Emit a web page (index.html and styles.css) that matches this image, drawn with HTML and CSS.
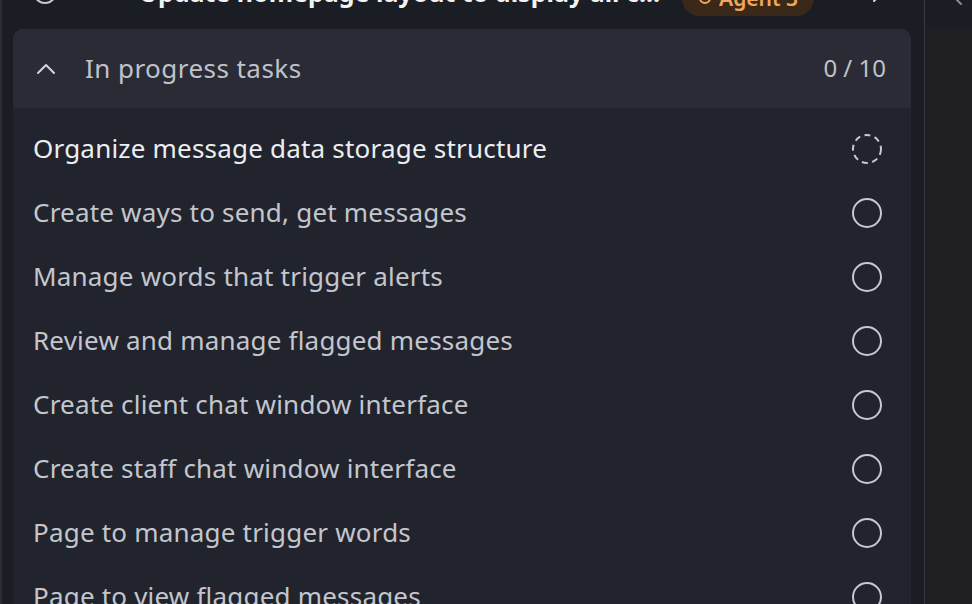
FILE: index.html
```html
<!DOCTYPE html>
<html lang="en">
<head>
<meta charset="utf-8">
<title>Tasks</title>
<link rel="stylesheet" href="styles.css">
</head>
<body>
<div class="app">
  <div class="main">
    <div class="top-row">
      <svg class="top-icon" width="26" height="26" viewBox="0 0 26 26"><circle cx="13" cy="13" r="11" fill="none" stroke="#c8c9d0" stroke-width="2"/></svg>
      <span class="top-title">Update homepage layout to display all c...</span>
      <span class="badge"><svg width="16" height="16" viewBox="0 0 16 16"><circle cx="8" cy="8" r="5" fill="none" stroke="#f2a55a" stroke-width="2"/></svg>Agent 3</span>
      <svg class="top-chev" width="16" height="20" viewBox="0 0 16 20"><path d="M4 2 L12 10 L4 18" fill="none" stroke="#d8d9de" stroke-width="2" stroke-linecap="round" stroke-linejoin="round"/></svg>
    </div>
    <section class="card">
      <header class="card-head">
        <svg class="chev-up" width="20" height="12" viewBox="0 0 20 12"><path d="M2 10 L10 2 L18 10" fill="none" stroke="#d4d5dc" stroke-width="2" stroke-linecap="round" stroke-linejoin="round"/></svg>
        <span class="head-title">In progress tasks</span>
        <span class="head-count">0 / 10</span>
      </header>
      <ul class="tasks">
        <li class="task active"><span>Organize message data storage structure</span><svg width="30" height="30" viewBox="0 0 30 30"><circle cx="15" cy="15" r="14" fill="none" stroke="#c8c9d0" stroke-width="2" stroke-dasharray="6 4.5"/></svg></li>
        <li class="task"><span>Create ways to send, get messages</span><svg width="30" height="30" viewBox="0 0 30 30"><circle cx="15" cy="15" r="14" fill="none" stroke="#c8c9d0" stroke-width="2"/></svg></li>
        <li class="task"><span>Manage words that trigger alerts</span><svg width="30" height="30" viewBox="0 0 30 30"><circle cx="15" cy="15" r="14" fill="none" stroke="#c8c9d0" stroke-width="2"/></svg></li>
        <li class="task"><span>Review and manage flagged messages</span><svg width="30" height="30" viewBox="0 0 30 30"><circle cx="15" cy="15" r="14" fill="none" stroke="#c8c9d0" stroke-width="2"/></svg></li>
        <li class="task"><span>Create client chat window interface</span><svg width="30" height="30" viewBox="0 0 30 30"><circle cx="15" cy="15" r="14" fill="none" stroke="#c8c9d0" stroke-width="2"/></svg></li>
        <li class="task"><span>Create staff chat window interface</span><svg width="30" height="30" viewBox="0 0 30 30"><circle cx="15" cy="15" r="14" fill="none" stroke="#c8c9d0" stroke-width="2"/></svg></li>
        <li class="task"><span>Page to manage trigger words</span><svg width="30" height="30" viewBox="0 0 30 30"><circle cx="15" cy="15" r="14" fill="none" stroke="#c8c9d0" stroke-width="2"/></svg></li>
        <li class="task"><span>Page to view flagged messages</span><svg width="30" height="30" viewBox="0 0 30 30"><circle cx="15" cy="15" r="14" fill="none" stroke="#c8c9d0" stroke-width="2"/></svg></li>
      </ul>
    </section>
  </div>
  <aside class="side">
    <div class="side-top"><svg width="12" height="20" viewBox="0 0 12 20"><path d="M10 2 L2 10 L10 18" fill="none" stroke="#8a8b92" stroke-width="2" stroke-linecap="round"/></svg></div>
  </aside>
</div>
</body>
</html>
```

FILE: styles.css
```css
* { box-sizing: border-box; }
html, body { margin: 0; padding: 0; }
body {
  background: #1b1d25;
  font-family: "Noto Sans", "DejaVu Sans", sans-serif;
  overflow: hidden;
  width: 972px;
  height: 604px;
}
.app {
  display: flex;
  height: 604px;
  overflow: hidden;
}
.main {
  width: 925px;
  flex: none;
  border-left: 2px solid #2b2c32;
  border-right: 1px solid #3a3b42;
  background: #1b1d25;
  padding: 0 13px 0 11px;
}
.top-row {
  height: 40px;
  margin-top: -28px;
  margin-bottom: 17px;
  display: flex;
  align-items: center;
  padding-left: 19px;
}
.top-icon { flex: none; }
.top-title {
  margin-left: 81px;
  color: #f2f3f6;
  font-weight: 700;
  font-size: 25px;
  white-space: nowrap;
}
.badge {
  margin-left: 22px;
  height: 36px;
  margin-top: 12px;
  padding: 0 16px 0 15px;
  border-radius: 18px;
  background: #3a2918;
  color: #f2a55a;
  font-size: 21px;
  font-weight: 600;
  display: inline-flex;
  align-items: center;
  gap: 6px;
}
.top-chev { margin-left: 56px; margin-top: 2px; }
.card {
  border-radius: 10px;
  overflow: hidden;
  background: #22242d;
}
.card-head {
  height: 79px;
  background: #2a2b34;
  display: flex;
  align-items: center;
  padding: 0 25px 0 23px;
}
.chev-up { flex: none; }
.head-title {
  margin-left: 29px;
  color: #c0c2cb;
  font-size: 26px;
  letter-spacing: 0.45px;
  margin-top: -2px;
}
.head-count {
  margin-left: auto;
  color: #c0c2cb;
  font-size: 24px;
  margin-top: -2px;
}
.tasks {
  list-style: none;
  margin: 0;
  padding: 9px 29px 0 20px;
}
.task {
  height: 64px;
  display: flex;
  align-items: center;
  justify-content: space-between;
  color: #c4c6ce;
  font-size: 26px;
  letter-spacing: 0.2px;
}
.task span { margin-top: -2px; }
.task svg { flex: none; margin-top: -1px; }
.task.active { color: #eceef2; }
.side {
  flex: 1;
  background: #1f1f23;
}
.side-top {
  height: 28px;
  background: #1b1d25;
  padding-left: 26px;
  display: flex;
  align-items: flex-end;
  overflow: hidden;
}
.side-top svg { margin-bottom: 22px; }
```
